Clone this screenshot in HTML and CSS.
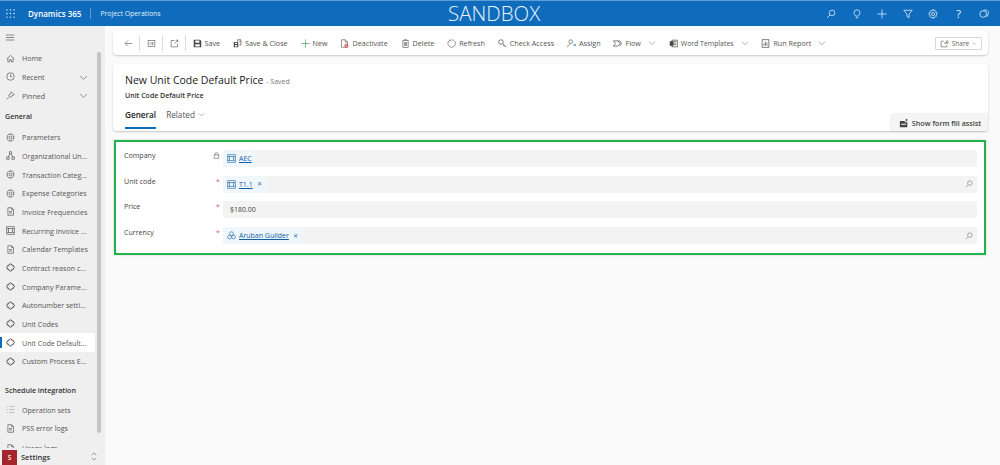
FILE: index.html
```html
<!DOCTYPE html>
<html lang="en">
<head>
<meta charset="utf-8">
<title>New Unit Code Default Price</title>
<link rel="stylesheet" href="styles.css">
</head>
<body>
<svg class="defs" width="0" height="0" aria-hidden="true">
  <symbol id="i-gear" viewBox="0 0 12 12"><circle cx="6" cy="6" r="1.800"/><path d="M5 1h2l.3 1.400 1.300-.6 1.400 1.400-.7 1.300 1.400.4v2l-1.400.4.7 1.300-1.400 1.400-1.300-.7L7 11H5l-.3-1.400-1.300.7-1.400-1.400.7-1.300L1.300 7V5l1.400-.4-.7-1.300 1.400-1.400 1.300.6z"/></symbol>
  <symbol id="i-puzzle" viewBox="0 0 12 12"><path stroke-width="1.300" d="M2.500 3H4.300C4.300 .5 7.700 .5 7.700 3H9.500V4.500C11.800 4.500 11.800 7.500 9.500 7.500V9H7.700C7.700 11.500 4.300 11.500 4.300 9H2.500V7.500C.2 7.500 .2 4.500 2.500 4.500z"/></symbol>
  <symbol id="i-box" viewBox="0 0 12 12"><rect x="1" y="1" width="10" height="10"/><rect x="3.500" y="3.500" width="5" height="5"/><path d="M1 3.500h2.500M8.500 3.500H11M1 8.500h2.500M8.500 8.500H11"/></symbol>
  <symbol id="i-chev" viewBox="0 0 12 12"><path d="M1.500 4l4.500 4.500L10.500 4"/></symbol>
  <symbol id="i-search" viewBox="0 0 12 12"><circle cx="7.300" cy="4.700" r="3.400"/><path d="M4.800 7.200L1.200 10.800"/></symbol>
  <symbol id="i-doc" viewBox="0 0 12 12"><path d="M2.500 1h5L10 3.500V11H2.500zM7.500 1v2.500H10M4 6h4M4 8h4"/></symbol>
</svg>
<div class="app">
  <header class="topbar">
    <svg class="waffle" viewBox="0 0 10 10"><g><circle cx="1" cy="1" r=".8"/><circle cx="5" cy="1" r=".8"/><circle cx="9" cy="1" r=".8"/><circle cx="1" cy="5" r=".8"/><circle cx="5" cy="5" r=".8"/><circle cx="9" cy="5" r=".8"/><circle cx="1" cy="9" r=".8"/><circle cx="5" cy="9" r=".8"/><circle cx="9" cy="9" r=".8"/></g></svg>
    <span class="brand">Dynamics 365</span>
    <span class="app-name">Project Operations</span>
    <span class="env">SANDBOX</span>
    <div class="top-icons">
      <svg class="top-icon"><use href="#i-search"/></svg>
      <svg class="top-icon" viewBox="0 0 12 12"><path d="M4.300 8.500C3.800 7 2.500 6.500 2.500 4.500a3.500 3.500 0 0 1 7 0c0 2-1.300 2.500-1.800 4zM4.500 10.500h3"/></svg>
      <svg class="top-icon" viewBox="0 0 12 12"><path d="M6 .5v11M.5 6h11"/></svg>
      <svg class="top-icon" viewBox="0 0 12 12"><path d="M1 1.500h10L7.300 6v4.500L4.700 9V6z"/></svg>
      <svg class="top-icon"><use href="#i-gear"/></svg>
      <span class="top-help">?</span>
      <svg class="top-icon" viewBox="0 0 12 12"><circle cx="5" cy="6" r="4"/><path d="M5 2.500a3.500 3.500 0 0 1 6 3.500 3 3 0 0 1-3 3"/></svg>
    </div>
  </header>
  <div class="body">
    <nav class="sidebar">
      <svg class="burger" viewBox="0 0 12 8"><path d="M1 1h10M1 4h10M1 7h10"/></svg>
      <ul class="nav nav-top">
        <li class="nav-item"><svg class="nav-icon" viewBox="0 0 12 12"><path d="M1 6.500L6 2l5 4.500M2.500 5.500V10.500h2.500V7.500h2V10.500h2.500V5.500"/></svg><span>Home</span></li>
        <li class="nav-item"><svg class="nav-icon" viewBox="0 0 12 12"><circle cx="6" cy="6" r="5"/><path d="M6 3v3.200h2.500"/></svg><span>Recent</span><svg class="nav-chev"><use href="#i-chev"/></svg></li>
        <li class="nav-item"><svg class="nav-icon" viewBox="0 0 12 12"><path d="M7 1l4 4-1 .5-2 .5-1.500 2.500L3.500 5.500 6 4l.5-2zM4.800 7.200L1 11"/></svg><span>Pinned</span><svg class="nav-chev"><use href="#i-chev"/></svg></li>
      </ul>
      <h2 class="nav-head">General</h2>
      <ul class="nav nav-general">
        <li class="nav-item"><svg class="nav-icon"><use href="#i-gear"/></svg><span>Parameters</span></li>
        <li class="nav-item"><svg class="nav-icon" viewBox="0 0 12 12"><rect x="4.500" y="1" width="3" height="3"/><rect x="1" y="8" width="3" height="3"/><rect x="8" y="8" width="3" height="3"/><path d="M5 4L3 8M7 4l2 4"/></svg><span>Organizational Un...</span></li>
        <li class="nav-item"><svg class="nav-icon"><use href="#i-gear"/></svg><span>Transaction Categ...</span></li>
        <li class="nav-item"><svg class="nav-icon"><use href="#i-gear"/></svg><span>Expense Categories</span></li>
        <li class="nav-item"><svg class="nav-icon"><use href="#i-doc"/></svg><span>Invoice Frequencies</span></li>
        <li class="nav-item"><svg class="nav-icon"><use href="#i-box"/></svg><span>Recurring Invoice ...</span></li>
        <li class="nav-item"><svg class="nav-icon"><use href="#i-doc"/></svg><span>Calendar Templates</span></li>
        <li class="nav-item"><svg class="nav-icon"><use href="#i-puzzle"/></svg><span>Contract reason c...</span></li>
        <li class="nav-item"><svg class="nav-icon"><use href="#i-puzzle"/></svg><span>Company Parame...</span></li>
        <li class="nav-item"><svg class="nav-icon"><use href="#i-puzzle"/></svg><span>Autonumber setti...</span></li>
        <li class="nav-item"><svg class="nav-icon"><use href="#i-puzzle"/></svg><span>Unit Codes</span></li>
        <li class="nav-item is-active"><svg class="nav-icon"><use href="#i-puzzle"/></svg><span>Unit Code Default...</span></li>
        <li class="nav-item"><svg class="nav-icon"><use href="#i-puzzle"/></svg><span>Custom Process E...</span></li>
      </ul>
      <h2 class="nav-head nav-head-sched">Schedule integration</h2>
      <ul class="nav">
        <li class="nav-item"><svg class="nav-icon nav-icon-light" viewBox="0 0 12 12"><path d="M1 2h1.500M4 2h7M1 6h1.500M4 6h7M1 10h1.500M4 10h7"/></svg><span>Operation sets</span></li>
        <li class="nav-item"><svg class="nav-icon"><use href="#i-doc"/></svg><span>PSS error logs</span></li>
        <li class="nav-item nav-item-clipped"><svg class="nav-icon"><use href="#i-doc"/></svg><span>Usage logs</span></li>
      </ul>
      <div class="nav-scroll"></div>
      <div class="area">
        <span class="area-badge">S</span>
        <span class="area-name">Settings</span>
        <svg class="area-switch" viewBox="0 0 8 12"><path d="M1 4.500L4 1l3 3.500M1 7.500L4 11l3-3.500"/></svg>
      </div>
    </nav>
    <main class="main">
      <div class="toolbar card">
        <button class="tb tb-icon tb-back"><svg class="ic" viewBox="0 0 12 12"><path d="M11 6H1.500M5.500 2L1.500 6l4 4"/></svg></button>
        <i class="tb-sep"></i>
        <button class="tb tb-icon"><svg class="ic" viewBox="0 0 12 12"><rect x="1.500" y="2" width="9" height="8"/><path d="M3.500 4.500h1M6 4.500h2.500M3.500 6h1M6 6h2.500M3.500 7.500h1M6 7.500h2.500"/></svg></button>
        <i class="tb-sep"></i>
        <button class="tb tb-icon"><svg class="ic" viewBox="0 0 12 12"><path d="M6 2H1.500v8.500H10V6M7.500 1.500h3v3M10.500 1.500L6 6"/></svg></button>
        <i class="tb-sep"></i>
        <button class="tb tb-save"><svg class="ic ic-dark" viewBox="0 0 12 12"><path class="solid" d="M1 1h8.500L11 2.500V11H1zM3 2v3h5.500V2zM3 7v3h6V7z"/></svg>Save</button>
        <button class="tb tb-close"><svg class="ic ic-dark" viewBox="0 0 12 12"><path class="solid" d="M1 4h6v7H1zM2.500 5v1.500h3V5zM2.500 8v2h3V8z"/><path d="M6 3V1h4.500v7H8.500M8 3l1 1 1-1"/></svg>Save &amp; Close</button>
        <button class="tb"><svg class="ic ic-green" viewBox="0 0 12 12"><path d="M6 .5v11M.5 6h11"/></svg>New</button>
        <button class="tb"><svg class="ic" viewBox="0 0 12 12"><path d="M2 1h5l3 3v7H2zM7 1v3h3"/><circle class="red" cx="8.500" cy="9" r="2.200"/></svg>Deactivate</button>
        <button class="tb"><svg class="ic" viewBox="0 0 12 12"><rect x="2.500" y="2" width="7" height="9.500"/><path d="M4.500 2V.8h3V2M4.500 4v5.500M6 4v5.500M7.500 4v5.500"/></svg>Delete</button>
        <button class="tb"><svg class="ic" viewBox="0 0 12 12"><path d="M3.500 1.800A5 5 0 1 0 6 1M3.500 .5v2h2.200"/></svg>Refresh</button>
        <button class="tb"><svg class="ic ic-dark" viewBox="0 0 12 12"><circle cx="4" cy="4" r="3"/><path d="M6 6l5 4.500M8 8l-1 1.500M10 9.500l-1 1"/></svg>Check Access</button>
        <button class="tb"><svg class="ic" viewBox="0 0 12 12"><circle cx="5" cy="3.500" r="2.500"/><path d="M1 11c0-3 1.500-4.500 4-4.500"/><path class="ic-blue" d="M8 8h3.500M10 6.500L11.500 8 10 9.500"/></svg>Assign</button>
        <button class="tb"><svg class="ic ic-dark" viewBox="0 0 12 12"><path d="M.5 2.500h6l3 3.500-3 3.500h-6l3-3.500zM6.500 2.500h2.500l2.500 3.500-2.500 3.500"/></svg>Flow<svg class="chev"><use href="#i-chev"/></svg></button>
        <button class="tb tb-word"><svg class="ic ic-dark" viewBox="0 0 12 12"><rect x="4" y="1.500" width="7" height="9"/><path d="M6 3.500h3.500M6 5.500h3.500M6 7.500h3.500"/><path class="solid" d="M1 3h5v6H1z"/></svg>Word Templates<svg class="chev"><use href="#i-chev"/></svg></button>
        <button class="tb"><svg class="ic ic-dark" viewBox="0 0 12 12"><rect x="1.500" y="1" width="9" height="10"/><path d="M4 9V6M6 9V3.500M8 9V5"/></svg>Run Report<svg class="chev"><use href="#i-chev"/></svg></button>
        <button class="share"><svg class="ic" viewBox="0 0 12 12"><path d="M5 3H1.500v7.500H9V8M6.500 6.500c0-2 1.500-3 3-3V2L11.500 4.300 9.500 6.500V5C8 5 7 5.500 6.500 6.500z"/></svg>Share<svg class="chev chev-sm"><use href="#i-chev"/></svg></button>
      </div>
      <section class="head card">
        <h1 class="title">New Unit Code Default Price <small class="saved">- Saved</small></h1>
        <p class="entity">Unit Code Default Price</p>
        <div class="tabs">
          <span class="tab is-on">General</span>
          <span class="tab">Related<svg class="chev"><use href="#i-chev"/></svg></span>
        </div>
        <button class="assist"><svg class="ic ic-dark ic-assist" viewBox="0 0 12 12"><path class="solid" d="M1 3.500h6V5h3v6H1zM2.500 7v1h6V7zM9 .5l.6 1.400L11 2.500l-1.400.6L9 4.500l-.6-1.400L7 2.500l1.400-.6z"/></svg>Show form fill assist</button>
      </section>
      <section class="form">
        <div class="row">
          <span class="label">Company</span>
          <svg class="req-lock" viewBox="0 0 12 12"><rect x="2" y="5" width="8" height="6.500"/><path d="M3.800 5V3a2.200 2.200 0 0 1 4.400 0v2"/></svg>
          <div class="field"><span class="chip"><svg class="chip-icon"><use href="#i-box"/></svg><a class="link">AEC</a></span></div>
        </div>
        <div class="row">
          <span class="label">Unit code</span>
          <span class="req">*</span>
          <div class="field"><span class="chip"><svg class="chip-icon"><use href="#i-box"/></svg><a class="link">T1.1</a><span class="x">✕</span></span><svg class="field-search"><use href="#i-search"/></svg></div>
        </div>
        <div class="row">
          <span class="label">Price</span>
          <span class="req">*</span>
          <div class="field field-text">$180.00</div>
        </div>
        <div class="row">
          <span class="label">Currency</span>
          <span class="req">*</span>
          <div class="field"><span class="chip"><svg class="chip-icon" viewBox="0 0 12 12"><circle cx="6" cy="3.500" r="2.500"/><circle cx="3.300" cy="8" r="2.500"/><circle cx="8.700" cy="8" r="2.500"/></svg><a class="link">Aruban Guilder</a><span class="x">✕</span></span><svg class="field-search"><use href="#i-search"/></svg></div>
        </div>
      </section>
    </main>
  </div>
</div>
</body>
</html>
```
FILE: styles.css
```css
* { box-sizing: border-box; }
html, body { margin: 0; height: 100%; overflow: hidden; }
body { font-family: "Open Sans", "Liberation Sans", sans-serif; font-size: 8px; color: #333; background: #fafafa; }
.defs { position: absolute; }
svg { fill: none; stroke: currentColor; stroke-width: .9; }
button { font: inherit; color: inherit; background: none; border: 0; padding: 0; }
ul { list-style: none; margin: 0; padding: 0; }
.app { height: 465px; display: flex; flex-direction: column; }

.topbar { height: 26px; flex: none; background: #0f6cbd; border-top: 1px solid #5f9fd8; color: #fff; display: flex; align-items: center; position: relative; }
.waffle { width: 9px; height: 9px; margin-left: 6px; fill: #fff; stroke: none; }
.brand { margin-left: 13px; font-size: 8px; font-weight: 600; padding-right: 9px; border-right: 1px solid #5b9bd5; line-height: 11px; }
.app-name { margin-left: 9px; font-size: 6.900px; color: #e3effa; }
.env { position: absolute; left: 448px; top: 0; font-size: 20.500px; line-height: 25px; color: #e8f2fb; font-weight: 300; }
.top-icons { margin-left: auto; margin-right: 11px; display: flex; align-items: center; gap: 15.500px; }
.top-icon { width: 10px; height: 10px; color: #eaf3fb; }
.top-help { width: 10px; text-align: center; font-size: 11px; line-height: 11px; color: #eaf3fb; }

.body { flex: 1; display: flex; min-height: 0; }
.sidebar { width: 105px; flex: none; background: #efefef; position: relative; overflow: hidden; }
.burger { display: block; width: 10px; height: 7px; margin: 8px 0 0 5px; color: #666; }
.nav-top { margin-top: 8px; }
.nav-item { height: 18.670px; display: flex; align-items: center; padding-left: 6px; color: #555; position: relative; width: 95px; white-space: nowrap; font-size: 7.100px; }
.nav-item-clipped { margin-top: 1px; }
.nav-icon { width: 9px; height: 9px; flex: none; margin-right: 7px; color: #555; }
.nav-icon-light { color: #aaa; }
.nav-chev { width: 9px; height: 9px; position: absolute; left: 79px; top: 5px; color: #666; }
.nav-head { margin: 5px 0 6px 5px; font-size: 7.100px; font-weight: 600; line-height: 12px; color: #333; }
.nav-head-sched { margin-top: 13px; margin-bottom: 5px; }
.is-active { background: #fff; }
.is-active::before { content: ""; position: absolute; left: 0; top: 4px; width: 2px; height: 11px; background: #0f6cbd; }
.nav-scroll { position: absolute; left: 97px; top: 26px; width: 4px; height: 381px; background: #c4c4c4; border-radius: 2px; }
.area { position: absolute; left: 0; right: 0; bottom: 0; height: 17px; background: #efefef; display: flex; align-items: center; padding-left: 2px; font-weight: 600; color: #333; }
.area-badge { width: 15px; height: 15px; margin-top: 2px; background: #a4262c; color: #fff; font-size: 6.500px; display: flex; align-items: center; justify-content: center; }
.area-name { margin-left: 4px; font-size: 7.500px; }
.area-switch { width: 6px; height: 9px; margin-left: auto; margin-right: 8px; color: #777; }

.main { flex: 1; min-width: 0; padding: 5px 12px 0 8px; }
.card { background: #fff; border-radius: 4px; box-shadow: 0 1px 2px rgba(0,0,0,.2); }
.toolbar { height: 24px; display: flex; align-items: center; padding-left: 10.500px; padding-right: 6px; color: #555; white-space: nowrap; }
.tb { display: flex; align-items: center; gap: 3px; margin-right: 12.900px; font-size: 7.200px; }
.tb-word { font-size: 6.900px; }
.tb-icon { margin-right: 0; width: 9px; }
.tb-sep { width: 1px; height: 16px; background: #ddd; margin: 0 6.500px; }
.ic { width: 9px; height: 9px; flex: none; color: #666; }
.ic-dark { color: #444; }
.ic-green { color: #3f9c5a; }
.ic-assist { width: 10px; height: 10px; }
.ic .solid { fill: currentColor; stroke: none; fill-rule: evenodd; }
.ic .red { fill: #e8a0a0; stroke: #d13438; }
.ic .ic-blue { color: #0f6cbd; }
.chev { width: 8px; height: 8px; margin-left: 4px; color: #777; }
.chev-sm { width: 5px; height: 5px; margin-left: 0; }
.share { margin-left: auto; width: 47px; height: 13px; border: 1px solid #d8d8d8; border-radius: 1px; display: flex; align-items: center; justify-content: center; gap: 3px; font-size: 6.500px; color: #666; }

.head { height: 67px; margin-top: 9px; position: relative; padding: 9px 0 0 12px; }
.title { margin: 0; font-size: 10.500px; font-weight: 400; line-height: 15px; color: #222; }
.saved { font-size: 7px; color: #777; }
.entity { margin: 2px 0 0; font-size: 7px; font-weight: 600; line-height: 10px; color: #333; }
.tabs { display: flex; gap: 10px; margin-top: 8px; font-size: 8.200px; color: #555; }
.tab { display: flex; align-items: flex-start; height: 20px; line-height: 12px; }
.tab .chev { margin: 2px 0 0 3px; width: 7px; height: 7px; }
.is-on { color: #222; font-weight: 600; border-bottom: 2px solid #0f6cbd; }
.assist { position: absolute; right: 1px; bottom: 0; width: 96px; height: 17px; padding-left: 2px; background: #f5f5f5; border-radius: 4px 0 0 0; box-shadow: 0 0 2px rgba(0,0,0,.2); display: flex; align-items: center; justify-content: center; gap: 3px; font-size: 7.200px; font-weight: 600; color: #444; }

.form { margin: 9px 2px 0 1px; height: 115px; background: #fff; border: 2px solid #22b14c; padding: 8px 7px 0 8px; display: flex; flex-direction: column; gap: 8.700px; box-shadow: 0 0 2px rgba(0,0,0,.2); }
.row { display: flex; height: 17px; flex: none; }
.label { width: 89px; line-height: 11px; font-size: 7.100px; color: #444; }
.req { width: 10px; text-align: left; color: #d9646a; font-size: 7px; line-height: 12px; padding-left: 3px; }
.req-lock { width: 7px; height: 7px; margin: 2px 3px 0 0; color: #555; }
.field { flex: 1; background: #f3f3f3; border-radius: 2px; display: flex; align-items: center; padding-right: 4px; height: 17px; font-size: 7px; }
.field-text { padding-left: 7px; color: #444; }
.chip { height: 17px; display: flex; align-items: center; background: #eff6fc; padding: 0 4px; border-radius: 2px; }
.chip-icon { width: 9px; height: 9px; margin-right: 3px; color: #2b6ea8; }
.link { color: #115ea3; text-decoration: underline; }
.x { margin-left: 4px; font-size: 6px; color: #2b6ea8; }
.field-search { width: 8px; height: 8px; margin-left: auto; color: #777; }
```
